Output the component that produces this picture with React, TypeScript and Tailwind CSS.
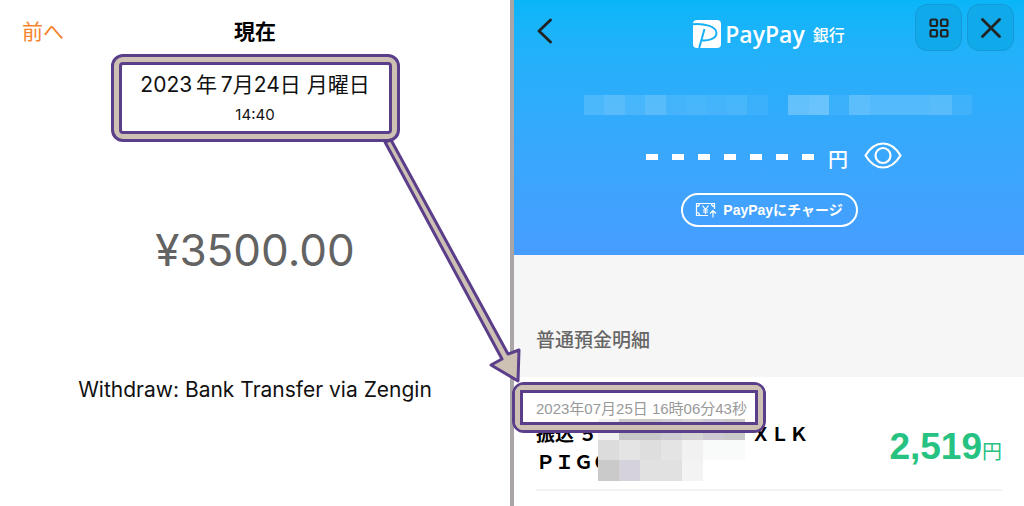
const headerMosaic = [
  'bg-white/14', 'bg-white/20', 'bg-white/12', 'bg-white/20', 'bg-white/10', 'bg-white/12', 'bg-white/10',
  'bg-white/12', 'bg-white/6', 'bg-transparent', 'bg-white/25', 'bg-white/28', 'bg-white/6', 'bg-white/22',
  'bg-white/18', 'bg-white/18', 'bg-white/18', 'bg-white/20', 'bg-white/8',
];

const nameMosaic = [
  'bg-[#f0f0f0]', 'bg-[#c9c8c9]', 'bg-[#c9c8c9]', 'bg-[#cfcdd4]', 'bg-[#d4d4d4]', 'bg-[#cdcad3]', 'bg-[#c9c9c9]',
  'bg-[#dcdcdc]', 'bg-[#e4e4e4]', 'bg-[#dedede]', 'bg-[#e4e4e4]', 'bg-[#f1f1f1]', 'bg-[#f9fafa]', 'bg-[#f9fafa]',
  'bg-[#cacaca]', 'bg-[#d5d2dc]', 'bg-[#e1e1e1]', 'bg-[#e1e1e1]', 'bg-[#f3f3f3]', 'bg-transparent', 'bg-transparent',
];

function PayPayMark() {
  return (
    <svg viewBox="0 0 28 28" className="h-7 w-7" aria-hidden="true">
      <rect width="28" height="28" rx="4" fill="#fff" />
      <path d="M0 4.200C10 3.200 23.500 6 23.500 13C23.500 19 15 20.800 8.500 20.300" fill="none" stroke="#16b0f8" strokeWidth="2" />
      <path d="M11.500 9L6.200 28" fill="none" stroke="#16b0f8" strokeWidth="2" />
    </svg>
  );
}

function TransferDetail() {
  return (
    <section className="flex flex-1 flex-col items-center bg-white font-['Inter','Noto_Sans_CJK_JP',sans-serif] text-[#111]">
      <header className="grid w-full grid-cols-3 items-center px-[22px] pt-[14px] text-[21px] leading-8">
        <a href="#prev" className="font-['Noto_Sans_CJK_JP',sans-serif] font-normal text-[#f5842c]">前へ</a>
        <h1 className="text-center font-['Noto_Sans_CJK_JP',sans-serif] font-bold text-black">現在</h1>
      </header>
      <div className="mt-2 rounded-xl border-[3px] border-[#5b3e8a] bg-[#cdc1b4] p-[5px]">
        <div className="w-[273px] rounded border-[3px] border-[#5b3e8a] bg-white pt-1 pb-[2px] text-center">
          <p className="text-[21px] leading-8">2023{'\u2009'}年{'\u2009'}7月24日 月曜日</p>
          <p className="text-[15px] leading-7">14:40</p>
        </div>
      </div>
      <p className="mt-20 text-[44px] leading-14 text-[#636363]">¥3500.00</p>
      <p className="mt-24 text-[21px] leading-8">Withdraw: Bank Transfer via Zengin</p>
    </section>
  );
}

function BankHeader() {
  return (
    <header className="flex h-[255px] flex-col bg-linear-to-b from-[#08b6f8] to-[#479dff] text-white">
      <div className="grid grid-cols-[1fr_auto_1fr] items-start px-[10px] pt-1">
        <button aria-label="戻る" className="ml-3 w-fit pt-[14px] text-[#222]">
          <svg viewBox="0 0 16 26" className="h-[26px] w-4" fill="none" stroke="currentColor" strokeWidth="2.800" strokeLinecap="round" strokeLinejoin="round">
            <path d="M14.500 2L3 13L14.500 24" />
          </svg>
        </button>
        <div className="flex items-center gap-1 pt-4">
          <PayPayMark />
          <span className="font-['Open_Sans',sans-serif] text-[23px] leading-7 font-semibold">PayPay</span>
          <span className="pl-1 font-['Noto_Sans_CJK_JP',sans-serif] text-base leading-7 font-medium">銀行</span>
        </div>
        <div className="flex justify-end gap-[5px] text-[#222]">
          <button aria-label="メニュー" className="flex h-[47px] w-[47px] items-center justify-center rounded-xl border border-[#1599d8] bg-[#10a9ea]">
            <svg viewBox="0 0 20 20" className="h-5 w-5" fill="none" stroke="currentColor" strokeWidth="2.200">
              <rect x="1.500" y="1.500" width="6.500" height="6.500" rx="1.500" />
              <rect x="12" y="1.500" width="6.500" height="6.500" rx="1.500" />
              <rect x="1.500" y="12" width="6.500" height="6.500" rx="1.500" />
              <rect x="12" y="12" width="6.500" height="6.500" rx="1.500" />
            </svg>
          </button>
          <button aria-label="閉じる" className="flex h-[47px] w-[47px] items-center justify-center rounded-xl border border-[#1599d8] bg-[#10a9ea]">
            <svg viewBox="0 0 20 20" className="h-5 w-5" stroke="currentColor" strokeWidth="2.800" strokeLinecap="round">
              <path d="M1.500 1.500L18.500 18.500M18.500 1.500L1.500 18.500" />
            </svg>
          </button>
        </div>
      </div>
      <div className="mt-11 ml-[70px] flex h-5 w-[388px]">
        {headerMosaic.map((tone, i) => (
          <span key={i} className={`flex-1 ${tone}`} />
        ))}
      </div>
      <div className="mt-6 flex h-9 items-center justify-center gap-[14px] pl-[10px]">
        <div className="flex items-center gap-[14px]" aria-label="残高非表示">
          {[0, 1, 2, 3, 4, 5, 6].map((i) => (
            <span key={i} className="h-[6px] w-3 bg-white" />
          ))}
        </div>
        <span className="pt-1 font-['Noto_Sans_CJK_JP',sans-serif] text-xl leading-8 font-medium">円</span>
        <button aria-label="残高を表示" className="pb-1 pl-[2px]">
          <svg viewBox="0 0 38 27" className="h-[27px] w-[38px]" fill="none" stroke="#fff" strokeWidth="2.200">
            <path d="M1.500 13.500C6 6 12 1.500 19 1.500S32 6 36.500 13.500C32 21 26 25.500 19 25.500S6 21 1.500 13.500Z" />
            <circle cx="19" cy="13.500" r="7.500" />
          </svg>
        </button>
      </div>
      <button className="mt-[18px] flex h-[34px] w-[177px] items-center justify-center gap-[6px] self-center rounded-full border-2 border-white">
        <svg viewBox="0 0 22 16" className="h-4 w-[22px]" fill="none" stroke="#fff" strokeWidth="1.200">
          <path d="M13 13.500H1.500V1.500H19.500V7M1.500 4.500C3.500 4.500 4.500 3.500 4.500 1.500M16.500 1.500C16.500 3.500 17.500 4.500 19.500 4.500M1.500 10.500C3.500 10.500 4.500 11.500 4.500 13.500" />
          <path d="M7.500 3.500L10.500 7.500L13.500 3.500M10.500 7.500V12M8 8H13M8 10H13M18 15.500V9M15 11.500L18 8.500L21 11.500" />
        </svg>
        <span className="font-['Liberation_Sans','Noto_Sans_CJK_JP',sans-serif] text-sm leading-5 font-bold">PayPayにチャージ</span>
      </button>
    </header>
  );
}

function BankStatement() {
  return (
    <section className="flex flex-1 flex-col bg-white font-['Liberation_Sans','Noto_Sans_CJK_JP',sans-serif]">
      <BankHeader />
      <h2 className="bg-[#f6f6f6] px-[22px] pt-[68px] pb-[22px] font-['Noto_Sans_CJK_JP',sans-serif] text-[19px] leading-8 font-medium text-[#666]">
        普通預金明細
      </h2>
      <article className="relative mx-[22px] border-b-2 border-[#f2f2f2] pt-[22px] pb-[14px]">
        <p className="text-[15px] leading-5 text-[#999]">2023年07月25日 16時06分43秒</p>
        <div className="flex items-center justify-between">
          <div className="font-['Noto_Sans_CJK_JP',sans-serif] text-[19px] leading-7 font-bold text-black">
            <p>振込 ５<span className="inline-block w-[154px]" />ＸＬＫ</p>
            <p>ＰＩＧＯ</p>
          </div>
          <p className="flex items-baseline text-[#26c281]">
            <span className="text-[37px] leading-10 font-bold">2,519</span>
            <span className="font-['Noto_Sans_CJK_JP',sans-serif] text-xl font-normal">円</span>
          </p>
        </div>
        <div className="absolute top-[42px] left-[62px] grid h-[62px] w-[147px] grid-cols-7">
          {nameMosaic.map((tone, i) => (
            <span key={i} className={tone} />
          ))}
        </div>
        <div className="absolute top-[5px] left-[-24px] h-[51px] w-[254px] rounded-xl border-[3px] border-[#5b3e8a]">
          <div className="h-full rounded-lg border-[5px] border-[#cdc1b4]">
            <div className="h-full border-[3px] border-[#5b3e8a]" />
          </div>
        </div>
      </article>
    </section>
  );
}

export default function App() {
  return (
    <main className="relative flex min-h-screen">
      <TransferDetail />
      <div className="w-1 bg-[#aaa6a8]" />
      <BankStatement />
      <svg viewBox="0 0 140 246" className="pointer-events-none absolute top-[138px] left-1/2 -ml-[130px] h-[246px] w-[140px]" aria-hidden="true">
        <path
          d="M3 4L9 2L126 216L137 212L136 243L109 227L120 221Z"
          fill="#cdc1b4"
          stroke="#5b3e8a"
          strokeWidth="3"
          strokeLinejoin="round"
        />
      </svg>
    </main>
  );
}
